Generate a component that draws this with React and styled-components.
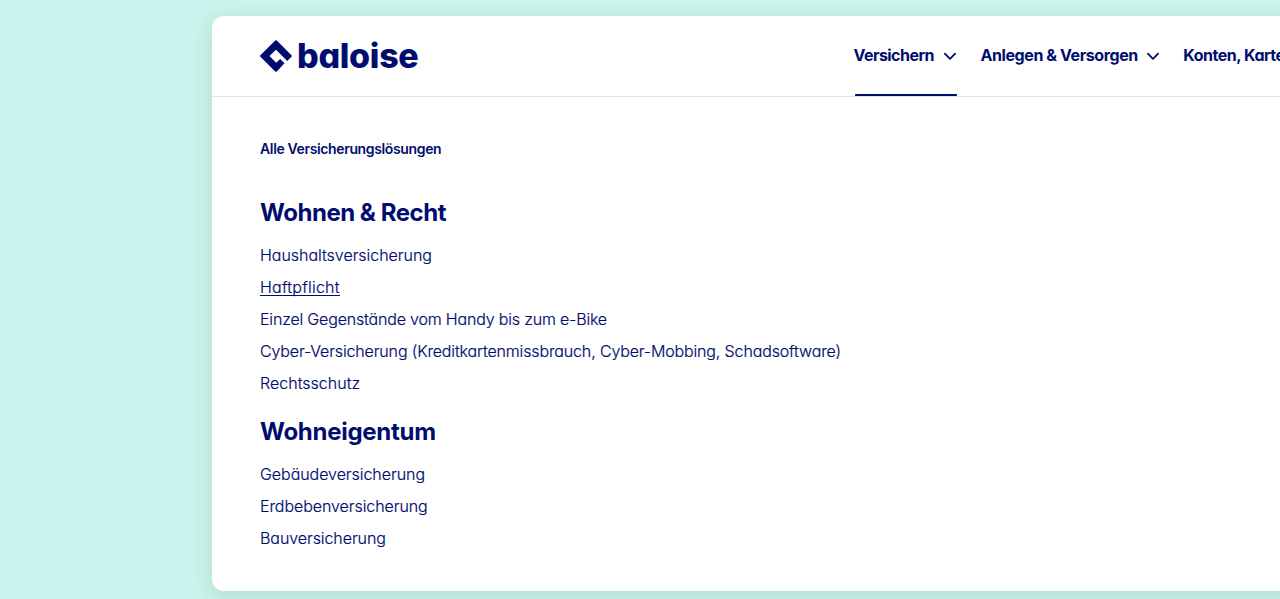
import React from "react";
import styled, { createGlobalStyle } from "styled-components";

const GlobalStyle = createGlobalStyle`
  *, *::before, *::after { box-sizing: border-box; }
  body {
    margin: 0;
    background: #cbf2ec;
    color: #000d6e;
    font-family: Inter, "Liberation Sans", sans-serif;
    font-feature-settings: "cv11" 1;
  }
`;

const Page = styled.div`
  height: 599px;
  padding: 16px 0 8px 212px;
  overflow: hidden;
`;

const Card = styled.div`
  width: 1180px;
  height: 575px;
  background: #fff;
  border-radius: 12px;
  box-shadow: 0 5px 20px rgba(30, 100, 40, 0.14);
`;

const Header = styled.header`
  display: flex;
  height: 81px;
  padding-left: 48px;
  border-bottom: 1px solid #e5e5e8;
`;

const Brand = styled.a`
  display: flex;
  align-items: center;
  gap: 5px;
  width: 593.5px;
  flex: none;
`;

const LogoMark = styled.svg`
  width: 32px;
  height: 32px;
  fill: currentColor;
`;

const Wordmark = styled.span`
  font-size: 34px;
  font-weight: 800;
  line-height: 40px;
  letter-spacing: -0.3px;
`;

const Nav = styled.nav`
  display: flex;
  gap: 23.5px;
`;

const NavItem = styled.a`
  position: relative;
  display: flex;
  align-items: center;
  gap: ${(p) => (p.$active ? 9 : 8)}px;
  flex: none;
  height: 80px;
  padding-bottom: 2px;
  font-size: 16px;
  font-weight: 700;
  line-height: 24px;
  letter-spacing: ${(p) => p.$tracking}px;
  white-space: nowrap;

  &::after {
    content: "";
    display: ${(p) => (p.$active ? "block" : "none")};
    position: absolute;
    left: 1.5px;
    right: 0;
    bottom: 0;
    height: 2px;
    border-radius: 1px 1px 0 0;
    background: #000d6e;
  }
`;

const Chevron = styled.svg`
  width: 14px;
  height: 14px;
  margin-top: 1px;
  fill: none;
  stroke: currentColor;
  stroke-width: 1.8;
  stroke-linecap: round;
  stroke-linejoin: round;
`;

const Menu = styled.main`
  padding: 40px 48px 0;
`;

const OverviewLink = styled.a`
  display: block;
  margin-bottom: 33px;
  font-size: 14px;
  font-weight: 600;
  line-height: 24px;
  letter-spacing: -0.36px;
`;

const Section = styled.section`
  margin-bottom: 14px;
`;

const Heading = styled.h2`
  margin: 0 0 7px;
  font-size: 24px;
  font-weight: 700;
  line-height: 38px;
  letter-spacing: ${(p) => p.$tracking}px;
`;

const List = styled.ul`
  margin: 0;
  padding: 0;
  list-style: none;
`;

const Item = styled.li`
  display: flex;
  align-items: flex-start;
  height: 32px;
  padding-top: 8px;
  font-size: 16px;
  font-weight: 300;
  -webkit-text-stroke: 0.2px currentColor;
  letter-spacing: ${(p) => p.$tracking}px;
  white-space: nowrap;
`;

const ItemLink = styled.a`
  line-height: 16px;
  border-bottom: 1px solid ${(p) => (p.$underlined ? "#000d6e" : "transparent")};
`;

const navItems = [
  { label: "Versichern", tracking: -0.54, active: true },
  { label: "Anlegen & Versorgen", tracking: -0.41 },
  { label: "Konten, Karten", tracking: -0.48 },
];

const sections = [
  {
    title: "Wohnen & Recht",
    tracking: -0.48,
    items: [
      { label: "Haushaltsversicherung", tracking: -0.03 },
      { label: "Haftpflicht", tracking: 0.24, underlined: true },
      { label: "Einzel Gegenstände vom Handy bis zum e-Bike", tracking: -0.18 },
      {
        label: "Cyber-Versicherung (Kreditkartenmissbrauch, Cyber-Mobbing, Schadsoftware)",
        tracking: -0.14,
      },
      { label: "Rechtsschutz", tracking: 0.02 },
    ],
  },
  {
    title: "Wohneigentum",
    tracking: -0.28,
    items: [
      { label: "Gebäudeversicherung", tracking: -0.05 },
      { label: "Erdbebenversicherung", tracking: -0.07 },
      { label: "Bauversicherung", tracking: -0.07 },
    ],
  },
];

export default function App() {
  return (
    <>
      <GlobalStyle />
      <Page>
        <Card>
          <Header>
            <Brand>
              <LogoMark viewBox="0 0 32 32">
                <path d="M15.2 .6q.8-.8 1.6 0L31.7 15.4q.6.6 0 1.2L27.2 21 16 9.7 9.5 16l6.7 6.8L20.2 19l4.3 4.3-7.7 8.1q-.8.8-1.6 0L.4 16.7q-.7-.7 0-1.4Z" />
              </LogoMark>
              <Wordmark>baloise</Wordmark>
            </Brand>
            <Nav>
              {navItems.map((n) => (
                <NavItem key={n.label} $active={n.active} $tracking={n.tracking}>
                  {n.label}
                  <Chevron viewBox="0 0 14 14">
                    <path d="M1.9 4.7 7 9.8 12.1 4.7" />
                  </Chevron>
                </NavItem>
              ))}
            </Nav>
          </Header>
          <Menu>
            <OverviewLink>Alle Versicherungslösungen</OverviewLink>
            {sections.map((s) => (
              <Section key={s.title}>
                <Heading $tracking={s.tracking}>{s.title}</Heading>
                <List>
                  {s.items.map((i) => (
                    <Item key={i.label} $tracking={i.tracking}>
                      <ItemLink $underlined={i.underlined}>{i.label}</ItemLink>
                    </Item>
                  ))}
                </List>
              </Section>
            ))}
          </Menu>
        </Card>
      </Page>
    </>
  );
}
